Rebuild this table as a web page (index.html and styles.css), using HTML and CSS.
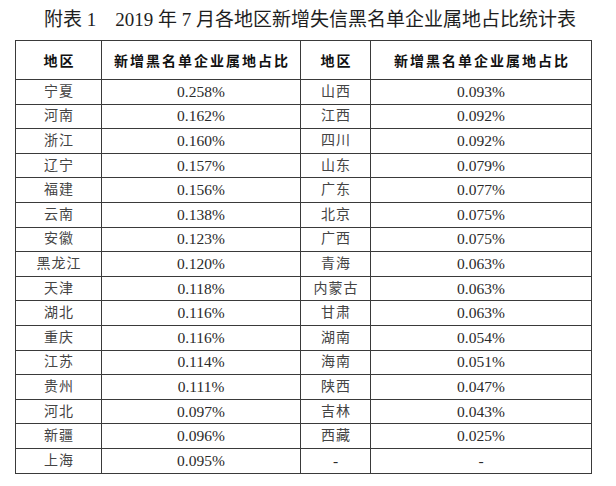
FILE: index.html
```html
<!DOCTYPE html>
<html lang="zh-CN">
<head>
<meta charset="utf-8">
<title>附表1</title>
<link rel="stylesheet" href="styles.css">
</head>
<body>
<div class="page">
  <h1 class="title">附表 1　2019 年 7 月各地区新增失信黑名单企业属地占比统计表</h1>
  <table class="stats">
    <colgroup>
      <col class="c-region">
      <col class="c-ratio">
      <col class="c-region2">
      <col class="c-ratio2">
    </colgroup>
    <thead>
      <tr>
        <th>地区</th><th>新增黑名单企业属地占比</th><th>地区</th><th>新增黑名单企业属地占比</th>
      </tr>
    </thead>
    <tbody>
      <tr><td class="r">宁夏</td><td>0.258%</td><td class="r">山西</td><td>0.093%</td></tr>
      <tr><td class="r">河南</td><td>0.162%</td><td class="r">江西</td><td>0.092%</td></tr>
      <tr><td class="r">浙江</td><td>0.160%</td><td class="r">四川</td><td>0.092%</td></tr>
      <tr><td class="r">辽宁</td><td>0.157%</td><td class="r">山东</td><td>0.079%</td></tr>
      <tr><td class="r">福建</td><td>0.156%</td><td class="r">广东</td><td>0.077%</td></tr>
      <tr><td class="r">云南</td><td>0.138%</td><td class="r">北京</td><td>0.075%</td></tr>
      <tr><td class="r">安徽</td><td>0.123%</td><td class="r">广西</td><td>0.075%</td></tr>
      <tr><td class="r">黑龙江</td><td>0.120%</td><td class="r">青海</td><td>0.063%</td></tr>
      <tr><td class="r">天津</td><td>0.118%</td><td class="r">内蒙古</td><td>0.063%</td></tr>
      <tr><td class="r">湖北</td><td>0.116%</td><td class="r">甘肃</td><td>0.063%</td></tr>
      <tr><td class="r">重庆</td><td>0.116%</td><td class="r">湖南</td><td>0.054%</td></tr>
      <tr><td class="r">江苏</td><td>0.114%</td><td class="r">海南</td><td>0.051%</td></tr>
      <tr><td class="r">贵州</td><td>0.111%</td><td class="r">陕西</td><td>0.047%</td></tr>
      <tr><td class="r">河北</td><td>0.097%</td><td class="r">吉林</td><td>0.043%</td></tr>
      <tr><td class="r">新疆</td><td>0.096%</td><td class="r">西藏</td><td>0.025%</td></tr>
      <tr><td class="r">上海</td><td>0.095%</td><td>-</td><td>-</td></tr>
    </tbody>
  </table>
</div>
</body>
</html>
```

FILE: styles.css
```css
html, body {
  margin: 0;
  padding: 0;
  background: #ffffff;
}

.page {
  width: 616px;
  height: 486px;
  overflow: hidden;
}

.title {
  margin: 0;
  height: 40px;
  line-height: 40px;
  padding-left: 4px;
  text-align: center;
  font-family: "Liberation Serif", "Noto Sans CJK SC", serif;
  font-size: 19px;
  font-weight: normal;
  color: #1e1e1e;
  white-space: nowrap;
}

.stats {
  margin-left: 15px;
  border-collapse: collapse;
  table-layout: fixed;
  width: 576px;
  font-family: "Liberation Serif", "Noto Sans CJK SC", serif;
  color: #2a2a2a;
}

.c-region { width: 86px; }
.c-ratio { width: 199px; }
.c-region2 { width: 70px; }
.c-ratio2 { width: 221px; }

.stats th,
.stats td {
  border: 1px solid #3a3a3a;
  padding: 0;
  text-align: center;
  vertical-align: middle;
  white-space: nowrap;
}

.stats thead tr {
  height: 39px;
}

.stats th {
  font-family: "Noto Sans CJK SC", sans-serif;
  font-weight: bold;
  font-size: 14px;
  letter-spacing: 2px;
  padding-left: 2px;
  color: #111;
}

.stats tbody tr {
  height: 24.6px;
}

.stats td {
  font-size: 15.5px;
  line-height: 18px;
}

.stats td.r {
  font-size: 14px;
  letter-spacing: 1px;
  padding-left: 1px;
  color: #444;
}
```
